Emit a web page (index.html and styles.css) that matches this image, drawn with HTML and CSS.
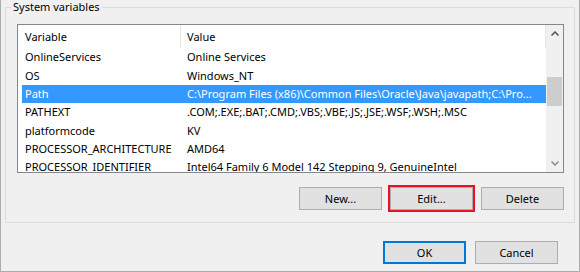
FILE: index.html
```html
<!DOCTYPE html>
<html lang="en">
<head>
  <meta charset="UTF-8" />
  <title>Environment Variables</title>
  <meta name="viewport" content="width=device-width, initial-scale=1.0" />
  <link rel="stylesheet" href="styles.css">
</head>
<body>
  <div class="dialog">
    <fieldset class="group">
      <legend>System variables</legend>
      <div class="group-body">
        <div class="list">
          <div class="list-body">
            <div class="list-head">
              <div class="col-name">Variable</div>
              <div class="col-value">Value</div>
            </div>
            <div class="row"><div class="col-name">OnlineServices</div><div class="col-value">Online Services</div></div>
            <div class="row"><div class="col-name">OS</div><div class="col-value">Windows_NT</div></div>
            <div class="row selected"><div class="col-name">Path</div><div class="col-value">C:\Program Files (x86)\Common Files\Oracle\Java\javapath;C:\Pro...</div></div>
            <div class="row"><div class="col-name">PATHEXT</div><div class="col-value">.COM;.EXE;.BAT;.CMD;.VBS;.VBE;.JS;.JSE;.WSF;.WSH;.MSC</div></div>
            <div class="row"><div class="col-name">platformcode</div><div class="col-value">KV</div></div>
            <div class="row"><div class="col-name">PROCESSOR_ARCHITECTURE</div><div class="col-value">AMD64</div></div>
            <div class="row"><div class="col-name">PROCESSOR_IDENTIFIER</div><div class="col-value">Intel64 Family 6 Model 142 Stepping 9, GenuineIntel</div></div>
          </div>
          <div class="scrollbar">
            <div class="arrow up">
              <svg width="8" height="5" viewBox="0 0 8 5"><polyline points="0.5,4.5 4,1 7.5,4.5" fill="none" stroke="#505050" stroke-width="1.5"/></svg>
            </div>
            <div class="track"><div class="thumb"></div></div>
            <div class="arrow down">
              <svg width="8" height="5" viewBox="0 0 8 5"><polyline points="0.5,0.5 4,4 7.5,0.5" fill="none" stroke="#8a8a8a" stroke-width="1.5"/></svg>
            </div>
          </div>
        </div>

        <div class="buttons">
          <button>New...</button>
          <button class="marked">Edit...</button>
          <button>Delete</button>
        </div>
      </div>
    </fieldset>

    <div class="buttons footer">
      <button class="default">OK</button>
      <button>Cancel</button>
    </div>
  </div>
</body>
</html>
```

FILE: styles.css
```css
body {
  margin: 0;
  background: #f0f0f0;
  color: #000;
  font-family: "Noto Sans", sans-serif;
  font-size: 11px;
}
.dialog {
  width: 580px;
  height: 272px;
  box-sizing: border-box;
  border-left: 1px solid #acacac;
  border-right: 1px solid #acacac;
  border-bottom: 1px solid #acacac;
  padding: 0 4px;
}
.group {
  margin: 0;
  padding: 0;
  border: 1px solid #dcdcdc;
  min-width: 0;
}
.group legend {
  margin-left: 5px;
  padding: 0 2px;
  line-height: 14px;
}
.group-body {
  padding: 10px 10px 12px 11px;
}
.list {
  display: flex;
  height: 149px;
  box-sizing: border-box;
  border: 1px solid #828790;
  background: #fff;
  overflow: hidden;
}
.list-body {
  flex: 1;
  min-width: 0;
  overflow: hidden;
}
.list-head,
.row {
  display: grid;
  grid-template-columns: 159px 1fr;
  margin-left: 4px;
  white-space: nowrap;
}
.list-head {
  height: 23.33px;
  line-height: 23.33px;
}
.row {
  height: 18.33px;
  line-height: 18.33px;
}
.col-name {
  padding-left: 3px;
  overflow: hidden;
}
.col-value {
  padding-left: 6px;
  overflow: hidden;
}
.list-head .col-name,
.list-head .col-value {
  border-right: 1px solid #e5e5e5;
}
.row.selected {
  background: #3399ff;
  color: #fff;
}
.scrollbar {
  width: 17px;
  display: flex;
  flex-direction: column;
  background: #f0f0f0;
}
.arrow {
  height: 17px;
  display: flex;
  align-items: center;
  justify-content: center;
}
.arrow svg {
  display: block;
}
.track {
  flex: 1;
  padding-top: 35px;
}
.thumb {
  height: 29px;
  margin: 0 1px;
  background: #cdcdcd;
}
.buttons {
  display: flex;
  justify-content: flex-end;
  gap: 8px;
  margin-top: 14px;
}
button {
  width: 83px;
  height: 23px;
  padding: 0;
  border: 1px solid #adadad;
  background: #e1e1e1;
  color: #000;
  font-family: inherit;
  font-size: 11px;
}
button.marked {
  outline: 2px solid #e81123;
}
button.default {
  border-color: #0078d7;
  box-shadow: inset 0 0 0 1px #0078d7;
}
.footer {
  gap: 9px;
  margin-top: 18px;
  margin-right: 17px;
}
```
